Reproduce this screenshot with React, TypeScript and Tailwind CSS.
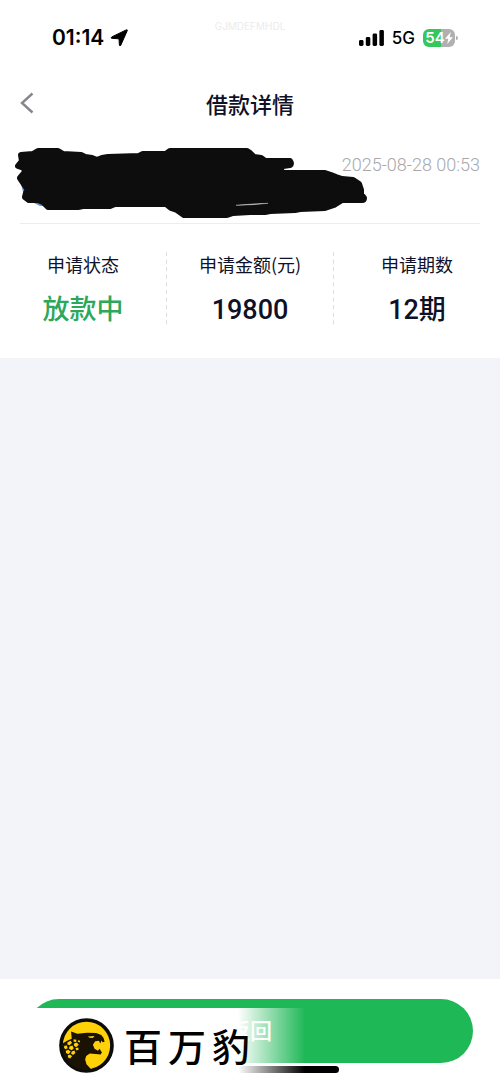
import type { ReactNode } from 'react';

const NUM_FONT = "font-[Roboto,'Noto_Sans_CJK_SC',sans-serif]";

function StatusBar() {
    return (
        <div className="relative flex h-[75px] items-center justify-between pl-[52px] pr-[42px] font-[Inter,sans-serif] text-black">
            <div className="flex items-center gap-1.5">
                <span className="text-[21px] font-semibold leading-6">01:14</span>
                <svg className="h-[18px] w-[18px]" viewBox="0 0 18 18" fill="currentColor" aria-hidden="true">
                    <path
                        d="M17.200 1.800 10.800 16.200q-.9 1.600-1.400-.2L9 9.800 2 9.300q-1.900-.4-.2-1.400L16.200.9q1.500-.5 1 .9z"
                        stroke="currentColor"
                        strokeWidth="1"
                        strokeLinejoin="round"
                    />
                </svg>
            </div>
            <span className="absolute left-1/2 top-5 -translate-x-1/2 text-[10px] leading-3 text-[#ececec]">GJMDEFMHDL</span>
            <div className="flex items-center">
                <svg className="h-4 w-[25px]" viewBox="0 0 25 16" fill="currentColor" aria-hidden="true">
                    <rect x="0" y="10" width="4.500" height="6" rx="1.400" />
                    <rect x="6.800" y="7" width="4.500" height="9" rx="1.400" />
                    <rect x="13.600" y="3.600" width="4.500" height="12.400" rx="1.400" />
                    <rect x="20.400" y="0" width="4.500" height="16" rx="1.400" />
                </svg>
                <span className="ml-2 text-[17px] font-medium leading-5">5G</span>
                <div className="ml-2 flex h-[18px] w-8 items-center justify-center rounded-md bg-linear-to-r from-[#34c759] from-55% to-[#b0b0b0] to-55% text-white">
                    <span className="text-[15px] font-semibold leading-4">54</span>
                    <svg className="h-3 w-2" viewBox="0 0 8 12" fill="currentColor" aria-hidden="true">
                        <path d="M5.800 0 0 6.800h3.300L2.200 12 8 5.200H4.700z" />
                    </svg>
                </div>
                <span className="ml-px h-1 w-0.5 rounded-r-full bg-[#b0b0b0]" />
            </div>
        </div>
    );
}

function Scribble() {
    return (
        <svg className="absolute left-[14px] top-[16px] h-[72px] w-[354px]" viewBox="14 147 354 72" aria-hidden="true">
            <path d="M20.500 182 23 192 30 201 40 206 44 206 42 188z" fill="#5b95d8" />
            <path
                d="M21 155 33 154 38 151 58 151 63 154 81 155 85 157 92 158 97 160 102 158 108 157 139 156 143 154 166 154 170 151 247 151 250 153 254 157 261 158 265 161 290 161Q292 163.500 290 165L283 166 278 173 325 173 331 175 336 177 342 179 353 180 359 184 361 190 361 194 364 198Q364 200 362 200L342 200 334 205 325 208 300 209 295 210 270 211 265 212 250 212 233 213 227 215 184 215 177 210 171 208 166 204 115 204 110 206 83 206 78 207 48 207 43 202 38 200 29 200 25 197 26 193 28 190 24 184 20 178 25 172 24 168 18 166 22 161z"
                fill="#0d0d0d"
                stroke="#0d0d0d"
                strokeWidth="6"
                strokeLinejoin="round"
            />
            <path d="M236 205.300Q252 203.800 268 203.300Q252 205 236 205.300z" fill="#fff" stroke="#bbb" strokeWidth=".5" />
        </svg>
    );
}

function Stat({ label, children }: { label: string; children: ReactNode }) {
    return (
        <div className="flex flex-1 flex-col items-center gap-4">
            <dt className="text-[18px] leading-6">{label}</dt>
            <dd className="h-8 text-[27px] font-medium leading-8">{children}</dd>
        </div>
    );
}

function Divider() {
    return (
        <svg className="h-[73px] w-px" viewBox="0 0 1 73" aria-hidden="true">
            <path d="M.5 0V73" stroke="#dcdce0" strokeDasharray="4 3.600" />
        </svg>
    );
}

function PantherLogo() {
    return (
        <svg className="h-[55px] w-[55px]" viewBox="178 141 164 164" aria-hidden="true">
            <circle cx="260" cy="223" r="76" fill="#ffd107" stroke="#0c0c0c" strokeWidth="11" />
            <path
                d="M190 216 202 209 216 203 214 181 233 188 262 185 289 186 304 192 311 201 314 212 308 213 305 208 301 217 297 209 286 210 279 221 284 233 294 239 299 233 306 244 302 250 288 248 270 247 259 254 256 265 260 279 273 293 260 297 240 294 219 284 203 268 193 250 188 232z"
                fill="#1a1304"
            />
            <path d="M264 196 284 195 279 201 269 200z" fill="#ffd107" />
            <path
                d="M203 214l9-5 5 6-7 7-7-2zM222 204l8 2-1 7-8-2zM194 224l7-1 3 8-7 3-4-4zM209 226l9-3 4 8-6 6-8-4zM222 218l9-4 6 7-8 7-6-4zM198 239l8-3 7 6-7 7-7-4zM216 241l8-3 3 7-7 6-6-4zM227 231l8-2 2 6-7 3zM204 253l7-3 6 5-6 7-6-3zM235 207l6 2-1 5-6-2z"
                fill="#ffd107"
            />
        </svg>
    );
}

function Watermark() {
    return (
        <div className="pointer-events-none absolute left-0 top-[29px] flex h-[66px] w-[305px] items-center bg-linear-to-r from-white from-78% to-transparent pl-[59px] pt-2">
            <PantherLogo />
            <div className="ml-[10px] flex gap-[6px] font-[Noto_Sans_CJK_SC,sans-serif] text-[38px] font-medium leading-[56px] text-black">
                <span>百</span>
                <span>万</span>
                <span>豹</span>
            </div>
        </div>
    );
}

export default function App() {
    return (
        <main className="flex min-h-screen flex-col bg-[#f3f4f9] font-['Noto_Sans_CJK_SC',sans-serif] text-[#0f1128]">
            <div className="bg-white">
                <StatusBar />
                <header className="relative flex h-14 items-center justify-center">
                    <button type="button" aria-label="返回上一页" className="absolute left-5 flex h-6 w-4 items-center">
                        <svg className="h-[22px] w-[14px]" viewBox="0 0 14 22" fill="none" stroke="#85878d" strokeWidth="2.400" aria-hidden="true">
                            <path d="M12.500 1.500 2 11 12.500 20.500" />
                        </svg>
                    </button>
                    <h1 className="text-[22px] font-medium leading-8">借款详情</h1>
                </header>

                <div className="relative mx-5 flex h-[93px] justify-end border-b border-[#ededed] pt-[22px]">
                    <time className={`${NUM_FONT} text-[18px] font-light leading-6 text-[#a8a8ac]`}>2025-08-28 00:53</time>
                    <div className="absolute -left-5 top-0">
                        <Scribble />
                    </div>
                </div>

                <dl className="flex items-start pb-[33px] pt-7">
                    <Stat label="申请状态"><span className="text-[#2ba85a]">放款中</span></Stat>
                    <Divider />
                    <Stat label="申请金额(元)"><span className={NUM_FONT}>19800</span></Stat>
                    <Divider />
                    <Stat label="申请期数"><span className={NUM_FONT}>12期</span></Stat>
                </dl>
            </div>

            <div className="flex-1" />

            <footer className="relative flex h-[104px] flex-col items-center bg-white px-[27px] pt-5">
                <button type="button" className="h-16 w-full rounded-full bg-[#1fb857] pb-1 text-[22px] font-medium leading-8 text-white">返回</button>
                <span className="mt-[3px] h-[7px] w-[178px] rounded-full bg-black" />
                <Watermark />
            </footer>
        </main>
    );
}
